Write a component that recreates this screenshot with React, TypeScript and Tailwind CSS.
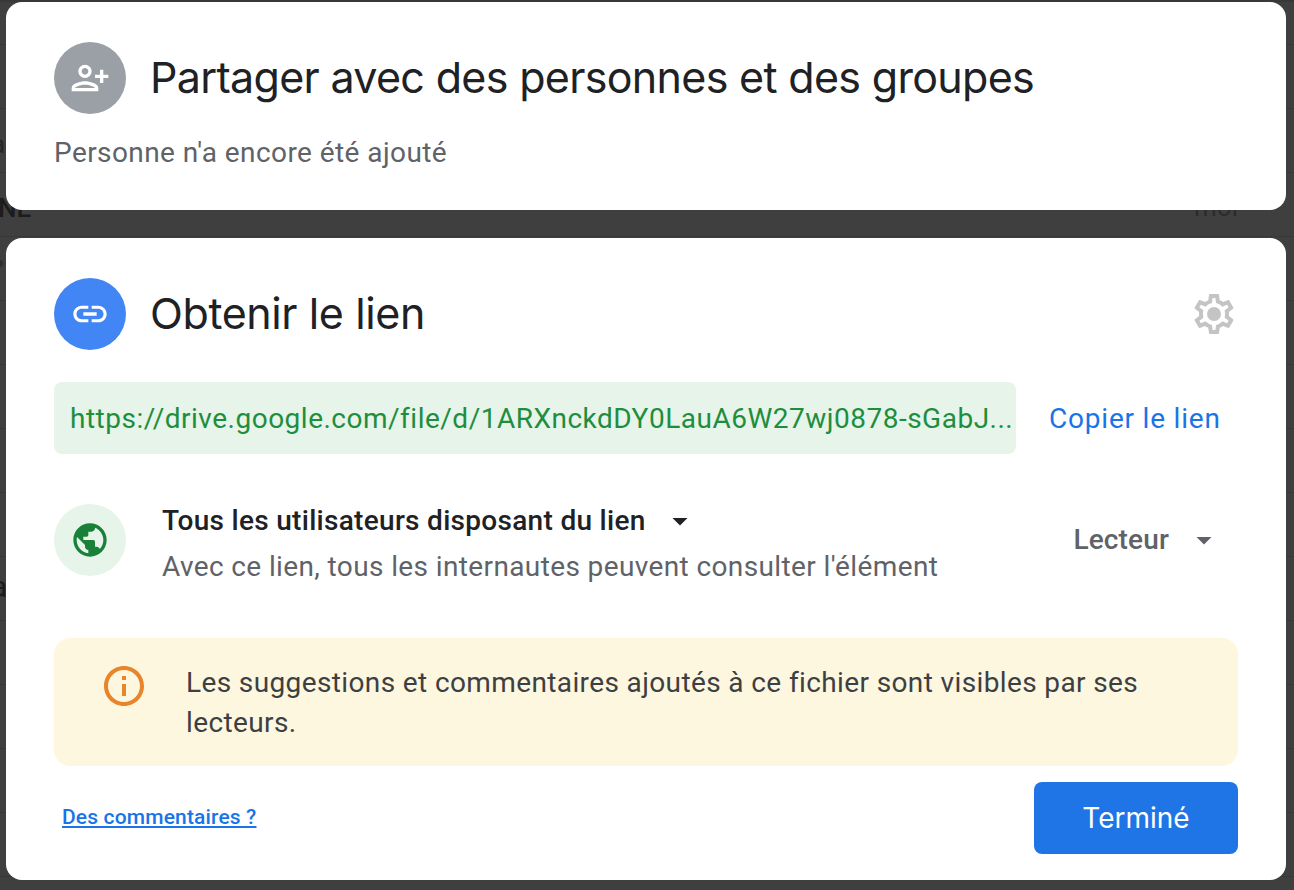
import React from "react";

const Caret = ({ className }: { className: string }) => (
  <svg viewBox="0 0 24 24" className={className} fill="currentColor">
    <path d="M7 10l5 5 5-5z" />
  </svg>
);

const rows: { left?: string; leftClass?: string; right?: string }[] = [
  {},
  { left: "a", leftClass: "text-[26px] text-[#262626] -ml-[9px] mt-[8px]" },
  { left: "NE", leftClass: "text-[26px] font-medium text-[#1c1c1c] -ml-[2px] mt-[7px]", right: "moi" },
  { left: "•", leftClass: "text-[34px] text-[#2e2e2e] -ml-[6px] -mt-[8px]" },
  {},
  {},
  {},
  {},
  { left: "a", leftClass: "text-[30px] text-[#1c1c1c] -ml-[9px] -mt-[4px]" },
  {},
  {},
  {},
  {},
];

export default function App() {
  return (
    <div className="relative h-[890px] w-[1294px] overflow-hidden bg-[#3f3f3f] font-['Roboto',sans-serif]">
      <div className="flex flex-col">
        <div className="h-[45px] border-t-2 border-b border-t-[#383838] border-b-[#383838]" />
        {rows.map((r, i) => (
          <div key={i} className="flex h-16 items-center justify-between border-b border-[#383838]">
            <span className={r.leftClass}>{r.left}</span>
            {r.right && <span className="mr-[56px] mt-[5px] text-[26px] text-[#2c2c2c]">{r.right}</span>}
          </div>
        ))}
      </div>

      <div className="absolute inset-0 flex flex-col gap-[28px] pl-[6px] pr-[8px] pt-[2px]">
        <section className="h-[208px] rounded-[16px] bg-white px-[48px] pt-[40px]">
          <div className="flex items-center gap-[24px]">
            <div className="flex h-[72px] w-[72px] items-center justify-center rounded-full bg-[#9aa0a6]">
              <svg viewBox="0 0 24 24" className="h-10 w-10 -scale-x-100" fill="#fff">
                <path d="M15 12c2.21 0 4-1.79 4-4s-1.79-4-4-4-4 1.79-4 4 1.79 4 4 4zm0-6c1.1 0 2 .9 2 2s-.9 2-2 2-2-.9-2-2 .9-2 2-2zM15 14c-2.67 0-8 1.34-8 4v2h16v-2c0-2.66-5.33-4-8-4zm-6 4c.22-.72 3.31-2 6-2 2.7 0 5.8 1.29 6 2H9zm-3-3v-3h3v-2H6V7H4v3H1v2h3v3h2z" />
              </svg>
            </div>
            <h1 className="-mt-[2px] whitespace-nowrap font-['Inter',sans-serif] text-[43px] leading-[48px] font-normal tracking-[-0.68px] text-[#202124]">
              Partager avec des personnes et des groupes
            </h1>
          </div>
          <p className="mt-[21px] text-[28px] leading-[36px] tracking-[0.42px] text-[#5f6368]">Personne n'a encore été ajouté</p>
        </section>

        <section className="h-[642px] rounded-[16px] bg-white px-[48px] pt-[40px]">
          <div className="flex items-center">
            <div className="flex h-[72px] w-[72px] items-center justify-center rounded-full bg-[#4285f4]">
              <svg viewBox="0 0 24 24" className="h-10 w-10" fill="#fff">
                <path d="M3.9 12c0-1.71 1.39-3.1 3.1-3.1h4V7H7c-2.76 0-5 2.24-5 5s2.24 5 5 5h4v-1.9H7c-1.71 0-3.1-1.39-3.1-3.1zM8 13h8v-2H8v2zm9-6h-4v1.9h4c1.71 0 3.1 1.39 3.1 3.1s-1.39 3.1-3.1 3.1h-4V17h4c2.76 0 5-2.24 5-5s-2.24-5-5-5z" />
              </svg>
            </div>
            <h2 className="ml-[24px] -mt-[2px] flex-1 font-['Inter',sans-serif] text-[43px] leading-[48px] font-normal tracking-[-0.4px] text-[#202124]">
              Obtenir le lien
            </h2>
            <svg viewBox="0 0 24 24" className="h-12 w-12" fill="#c4c4c4">
              <path d="M19.43 12.98c.04-.32.07-.64.07-.98 0-.34-.03-.66-.07-.98l2.11-1.65c.19-.15.24-.42.12-.64l-2-3.46c-.09-.16-.26-.25-.44-.25-.06 0-.12.01-.17.03l-2.49 1c-.52-.4-1.08-.73-1.69-.98l-.38-2.65C14.46 2.18 14.25 2 14 2h-4c-.25 0-.46.18-.49.42l-.38 2.65c-.61.25-1.17.59-1.69.98l-2.49-1c-.06-.02-.12-.03-.18-.03-.17 0-.34.09-.43.25l-2 3.46c-.13.22-.07.49.12.64l2.11 1.65c-.04.32-.07.65-.07.98 0 .33.03.66.07.98l-2.11 1.65c-.19.15-.24.42-.12.64l2 3.46c.09.16.26.25.44.25.06 0 .12-.01.17-.03l2.49-1c.52.4 1.08.73 1.69.98l.38 2.65c.03.24.24.42.49.42h4c.25 0 .46-.18.49-.42l.38-2.65c.61-.25 1.17-.59 1.69-.98l2.49 1c.06.02.12.03.18.03.17 0 .34-.09.43-.25l2-3.46c.12-.22.07-.49-.12-.64l-2.11-1.65zm-1.98-1.71c.04.31.05.52.05.73 0 .21-.02.43-.05.73l-.14 1.13.89.7 1.08.84-.7 1.21-1.27-.51-1.04-.42-.9.68c-.43.32-.84.56-1.25.73l-1.06.43-.16 1.13-.2 1.35h-1.4l-.19-1.35-.16-1.13-1.06-.43c-.43-.18-.83-.41-1.23-.71l-.91-.7-1.06.43-1.27.51-.7-1.21 1.08-.84.89-.7-.14-1.13c-.03-.31-.05-.54-.05-.74s.02-.43.05-.73l.14-1.13-.89-.7-1.08-.84.7-1.21 1.27.51 1.04.42.9-.68c.43-.32.84-.56 1.25-.73l1.06-.43.16-1.13.2-1.35h1.39l.19 1.35.16 1.13 1.06.43c.43.18.83.41 1.23.71l.91.7 1.06-.43 1.27-.51.7 1.21-1.07.85-.89.7.14 1.13z" />
              <circle cx="12" cy="12" r="3.5" />
            </svg>
          </div>

          <div className="mt-[32px] flex items-center">
            <div className="flex h-[72px] w-[962px] shrink-0 items-center overflow-hidden rounded-[8px] bg-[#e6f4ea] pl-[16px]">
              <span className="mt-[1px] whitespace-nowrap text-[28px] font-[450] tracking-[0.5px] text-[#1e8e3e]">
                https://drive.google.com/file/d/1ARXnckdDY0LauA6W27wj0878-sGabJ...
              </span>
            </div>
            <button className="ml-[33px] mt-[1px] whitespace-nowrap text-[28px] font-[450] tracking-[0.8px] text-[#1a73e8]">Copier le lien</button>
          </div>

          <div className="mt-[50px] flex h-[72px] items-center">
            <div className="flex h-[72px] w-[72px] shrink-0 items-center justify-center rounded-full bg-[#e6f4ea]">
              <svg viewBox="0 0 24 24" className="h-10 w-10" fill="#188038">
                <path d="M12 2C6.48 2 2 6.48 2 12s4.48 10 10 10 10-4.48 10-10S17.52 2 12 2zm-1 17.93c-3.95-.49-7-3.85-7-7.93 0-.62.08-1.21.21-1.79L9 15v1c0 1.1.9 2 2 2v1.93zm6.9-2.54c-.26-.81-1-1.39-1.9-1.39h-1v-3c0-.55-.45-1-1-1H8v-2h2c.55 0 1-.45 1-1V7h2c1.1 0 2-.9 2-2v-.41c2.93 1.19 5 4.06 5 7.41 0 2.08-.8 3.97-2.1 5.39z" />
              </svg>
            </div>
            <div className="ml-[36px] mt-[8px] flex-1">
              <div className="flex h-[36px] items-center">
                <span className="text-[28px] font-[470] tracking-[0.3px] text-[#202124]">Tous les utilisateurs disposant du lien</span>
                <Caret className="ml-[16px] h-9 w-9 text-[#202124]" />
              </div>
              <p className="mt-[10px] whitespace-nowrap text-[28px] leading-[36px] tracking-[0.38px] text-[#5f6368]">
                Avec ce lien, tous les internautes peuvent consulter l'élément
              </p>
            </div>
            <div className="flex items-center pr-[16px] text-[#5f6368]">
              <span className="text-[28px] font-[470] tracking-[0.15px]">Lecteur</span>
              <Caret className="ml-[17px] h-9 w-9" />
            </div>
          </div>

          <div className="mt-[62px] flex h-[128px] rounded-[16px] bg-[#fef7e0] pl-[46px] pt-[24px] pr-[60px]">
            <svg viewBox="0 0 24 24" className="h-12 w-12 shrink-0" fill="#e8842a">
              <path d="M11 7h2v2h-2zm0 4h2v6h-2zm1-9C6.48 2 2 6.48 2 12s4.48 10 10 10 10-4.48 10-10S17.52 2 12 2zm0 18c-4.41 0-8-3.59-8-8s3.59-8 8-8 8 3.59 8 8-3.59 8-8 8z" />
            </svg>
            <p className="ml-[38px] mt-[1px] text-[28px] leading-[40px] tracking-[0.38px] text-[#3c4043]">
              Les suggestions et commentaires ajoutés à ce fichier sont visibles par ses lecteurs.
            </p>
          </div>

          <div className="mt-[16px] flex items-center justify-between">
            <a className="ml-[8px] -mt-[1px] text-[21px] font-[470] tracking-[0.15px] text-[#1a73e8] underline">Des commentaires ?</a>
            <button className="h-[72px] w-[204px] rounded-[8px] bg-[#1f74e6] font-['Inter',sans-serif] text-[28px] font-normal text-white">
              Terminé
            </button>
          </div>
        </section>
      </div>
    </div>
  );
}
